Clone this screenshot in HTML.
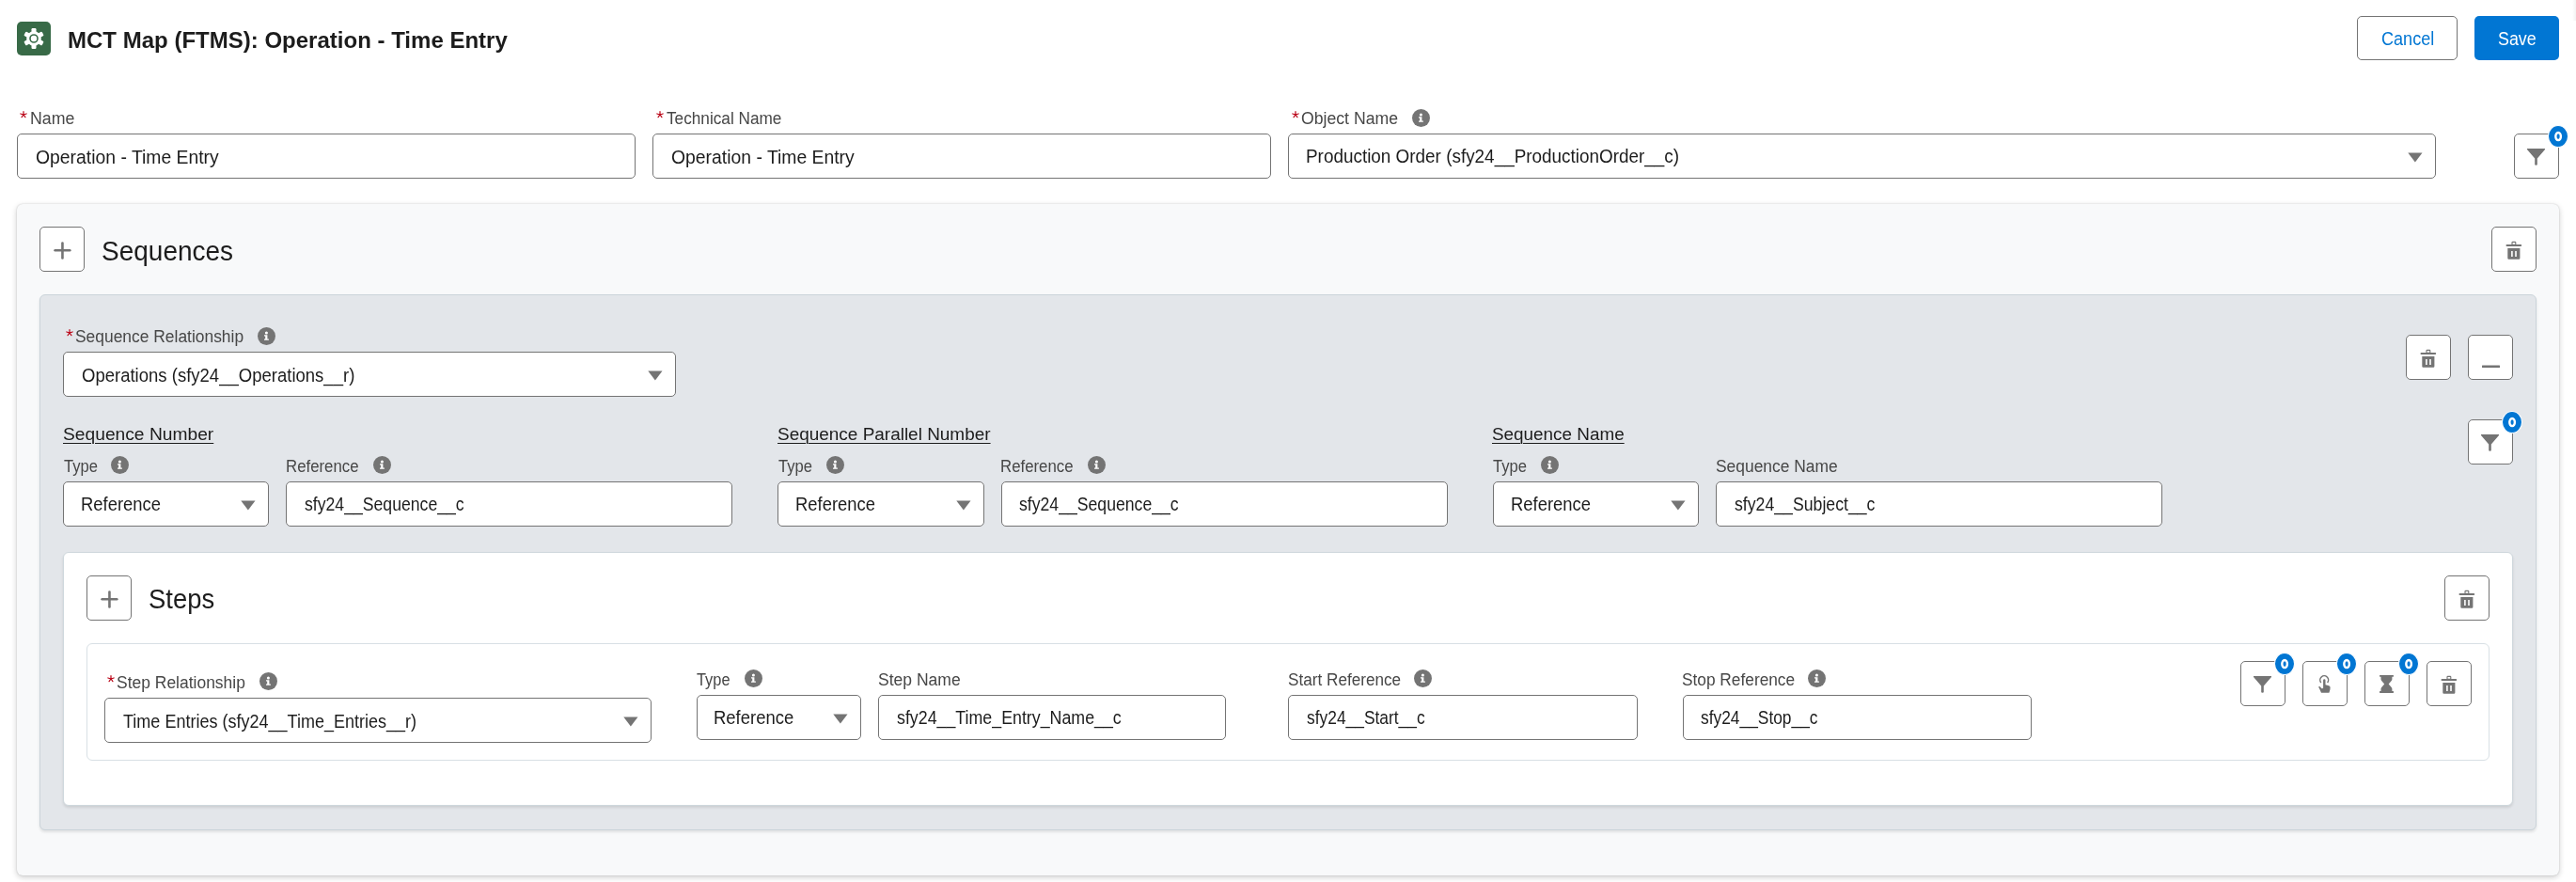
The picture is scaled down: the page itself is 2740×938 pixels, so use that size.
<!DOCTYPE html>
<html><head><meta charset='utf-8'><title>MCT Map</title>
<style>
html,body{margin:0;padding:0;background:#fff;width:2740px;height:938px;overflow:hidden;position:relative;font-family:"Liberation Sans", sans-serif;}
.abs,.t,.inp,.btn,.card,.gray,.white,.row,.badge,.info,.car{position:absolute;box-sizing:border-box;}
.t{white-space:pre;transform-origin:0 0;}
.inp{background:#fff;border:1px solid #747474;border-radius:5px;}
.btn{background:#fff;border:1px solid #747474;border-radius:5px;}
.btn svg{position:absolute;left:-1px;top:-1px;}
.card{background:#f8f9fa;border-radius:6px;box-shadow:0 0 1.5px rgba(0,0,0,0.2),0 2px 6px rgba(0,0,0,0.2);}
.gray{background:#e3e6ea;border:1px solid #cbd4da;border-radius:6px;box-shadow:0 2px 3px rgba(0,0,0,0.10);}
.white{background:#fff;border:1px solid #cfd8dd;border-radius:6px;box-shadow:0 2px 3px rgba(0,0,0,0.10);}
.row{background:#fff;border:1px solid #d8e0e5;border-radius:6px;}
.badge{width:22px;height:24px;border-radius:50%;background:#0176d3;border:1px solid #fff;color:#fff;font-weight:700;font-size:14px;line-height:22px;text-align:center;}
svg{display:block;}
</style></head><body>
<div class='abs' style='left:2736px;top:0;width:4px;height:22px;background:linear-gradient(to right,rgba(0,0,0,0),rgba(0,0,0,0.05))'></div><div class='abs' style='left:18px;top:23px;width:36px;height:36px;border-radius:5px;background:#386a47'>
<svg width='36' height='36' viewBox='0 0 36 36'><g fill='#fff' transform='translate(18 18)'>
<circle r='7.8'/>
<rect x='-2.5' y='-11' width='5' height='22' rx='1.2'/>
<rect x='-2.5' y='-11' width='5' height='22' rx='1.2' transform='rotate(60)'/>
<rect x='-2.5' y='-11' width='5' height='22' rx='1.2' transform='rotate(120)'/>
<circle r='4.0' fill='none' stroke='#386a47' stroke-width='1.6'/>
</g></svg></div><div class='btn' style='left:2507.00px;top:17.00px;width:107.00px;height:47.00px;'></div><div class='abs' style='left:2632.00px;top:17.00px;width:90.00px;height:47.00px;background:#0176d3;border-radius:5px;'></div><div class='inp' style='left:18.00px;top:142.00px;width:658.00px;height:48.00px;'></div><div class='inp' style='left:694.00px;top:142.00px;width:658.00px;height:48.00px;'></div><div class='inp' style='left:1370.00px;top:142.00px;width:1221.00px;height:48.00px;'></div><div class='car' style='left:2560.50px;top:162.00px'><svg width='16' height='11' viewBox='0 0 16 11'><path d='M0.3 0.6 H15.5 L7.9 10.4 Z' fill='#747474'/></svg></div><div class='btn' style='left:2674.00px;top:142.00px;width:48.00px;height:48.00px;background:#fff'><svg width='48' height='48' viewBox='0 0 48 48'><path fill='#747474' d='M14 15.9 H33 V17 L24.8 26.4 V33.0 Q24.8 33.8 23.5 33.8 Q22.2 33.8 22.2 33.0 V26.4 L14 17 Z'/></svg></div><div class='badge' style='left:2710.40px;top:132.70px'><svg width='20' height='22' viewBox='0 0 20 22'><ellipse cx='10.1' cy='11.1' rx='2.8' ry='4.05' fill='none' stroke='#fff' stroke-width='2.4'/></svg></div><div class='abs' style='left:19.90px;top:116.95px;width:10px;height:10px'><svg width='10' height='10' viewBox='0 0 10 10'><g stroke='#ba0517' stroke-width='1.2' stroke-linecap='round'><line x1='5' y1='5' x2='5.00' y2='1.70'/><line x1='5' y1='5' x2='8.14' y2='3.98'/><line x1='5' y1='5' x2='6.94' y2='7.67'/><line x1='5' y1='5' x2='3.06' y2='7.67'/><line x1='5' y1='5' x2='1.86' y2='3.98'/></g></svg></div><div class='abs' style='left:696.60px;top:116.95px;width:10px;height:10px'><svg width='10' height='10' viewBox='0 0 10 10'><g stroke='#ba0517' stroke-width='1.2' stroke-linecap='round'><line x1='5' y1='5' x2='5.00' y2='1.70'/><line x1='5' y1='5' x2='8.14' y2='3.98'/><line x1='5' y1='5' x2='6.94' y2='7.67'/><line x1='5' y1='5' x2='3.06' y2='7.67'/><line x1='5' y1='5' x2='1.86' y2='3.98'/></g></svg></div><div class='abs' style='left:1372.50px;top:116.95px;width:10px;height:10px'><svg width='10' height='10' viewBox='0 0 10 10'><g stroke='#ba0517' stroke-width='1.2' stroke-linecap='round'><line x1='5' y1='5' x2='5.00' y2='1.70'/><line x1='5' y1='5' x2='8.14' y2='3.98'/><line x1='5' y1='5' x2='6.94' y2='7.67'/><line x1='5' y1='5' x2='3.06' y2='7.67'/><line x1='5' y1='5' x2='1.86' y2='3.98'/></g></svg></div><div class='info' style='left:1502.00px;top:115.90px'><svg width='19' height='19' viewBox='0 0 19 19'><circle cx='9.5' cy='9.5' r='9.5' fill='#747474'/><circle cx='9.4' cy='5.95' r='1.55' fill='#fff'/><path d='M7.0 8.3 H10.4 V12.5 H11.9 V13.7 H7.0 V12.5 H8.2 V9.4 H7.0 Z' fill='#fff'/></svg></div><div class='card' style='left:18.00px;top:217.00px;width:2704.00px;height:714.00px;'></div><div class='btn' style='left:42.00px;top:241.00px;width:48.00px;height:48.00px;background:#fff'><svg width='48' height='48' viewBox='0 0 48 48'><g stroke='#747474' stroke-width='2.6' stroke-linecap='round'><line x1='16.6' y1='25.2' x2='32.3' y2='25.2'/><line x1='24.45' y1='17.5' x2='24.45' y2='33.4'/></g></svg></div><div class='btn' style='left:2650.00px;top:241.00px;width:48.00px;height:48.00px;background:#fff'><svg width='48' height='48' viewBox='0 0 48 48'><g fill='#747474' transform='translate(0.4,0)'>
<rect x='21.6' y='16.4' width='3.8' height='3.0' rx='0.7' fill='none' stroke='#747474' stroke-width='1.1'/>
<rect x='15.1' y='19.1' width='16.7' height='1.9' rx='0.9'/>
<path fill-rule='evenodd' d='M16.9 23.1 H30.0 V33.6 Q30.0 34.8 28.8 34.8 H18.1 Q16.9 34.8 16.9 33.6 Z M20.7 25.9 V32.0 H22.3 V25.9 Z M24.8 25.9 V32.0 H26.4 V25.9 Z'/>
</g></svg></div><div class='gray' style='left:42.00px;top:313.00px;width:2656.00px;height:570.00px;'></div><div class='inp' style='left:67.00px;top:374.00px;width:652.00px;height:48.00px;'></div><div class='car' style='left:688.50px;top:394.00px'><svg width='16' height='11' viewBox='0 0 16 11'><path d='M0.3 0.6 H15.5 L7.9 10.4 Z' fill='#747474'/></svg></div><div class='abs' style='left:69.30px;top:348.70px;width:10px;height:10px'><svg width='10' height='10' viewBox='0 0 10 10'><g stroke='#ba0517' stroke-width='1.2' stroke-linecap='round'><line x1='5' y1='5' x2='5.00' y2='1.70'/><line x1='5' y1='5' x2='8.14' y2='3.98'/><line x1='5' y1='5' x2='6.94' y2='7.67'/><line x1='5' y1='5' x2='3.06' y2='7.67'/><line x1='5' y1='5' x2='1.86' y2='3.98'/></g></svg></div><div class='info' style='left:273.80px;top:348.00px'><svg width='19' height='19' viewBox='0 0 19 19'><circle cx='9.5' cy='9.5' r='9.5' fill='#747474'/><circle cx='9.4' cy='5.95' r='1.55' fill='#fff'/><path d='M7.0 8.3 H10.4 V12.5 H11.9 V13.7 H7.0 V12.5 H8.2 V9.4 H7.0 Z' fill='#fff'/></svg></div><div class='btn' style='left:2559.00px;top:356.00px;width:48.00px;height:48.00px;background:#fff'><svg width='48' height='48' viewBox='0 0 48 48'><g fill='#747474' transform='translate(0.4,0)'>
<rect x='21.6' y='16.4' width='3.8' height='3.0' rx='0.7' fill='none' stroke='#747474' stroke-width='1.1'/>
<rect x='15.1' y='19.1' width='16.7' height='1.9' rx='0.9'/>
<path fill-rule='evenodd' d='M16.9 23.1 H30.0 V33.6 Q30.0 34.8 28.8 34.8 H18.1 Q16.9 34.8 16.9 33.6 Z M20.7 25.9 V32.0 H22.3 V25.9 Z M24.8 25.9 V32.0 H26.4 V25.9 Z'/>
</g></svg></div><div class='btn' style='left:2625.00px;top:356.00px;width:48.00px;height:48.00px;background:#fff'><svg width='48' height='48' viewBox='0 0 48 48'><rect x='15' y='32.5' width='19' height='2.6' rx='0.5' fill='#747474'/></svg></div><div class='btn' style='left:2625.00px;top:446.00px;width:48.00px;height:48.00px;background:#fff'><svg width='48' height='48' viewBox='0 0 48 48'><path fill='#747474' d='M14 15.9 H33 V17 L24.8 26.4 V33.0 Q24.8 33.8 23.5 33.8 Q22.2 33.8 22.2 33.0 V26.4 L14 17 Z'/></svg></div><div class='badge' style='left:2661.40px;top:436.70px'><svg width='20' height='22' viewBox='0 0 20 22'><ellipse cx='10.1' cy='11.1' rx='2.8' ry='4.05' fill='none' stroke='#fff' stroke-width='2.4'/></svg></div><div class='inp' style='left:67.00px;top:512.00px;width:219.00px;height:48.00px;'></div><div class='car' style='left:255.50px;top:532.00px'><svg width='16' height='11' viewBox='0 0 16 11'><path d='M0.3 0.6 H15.5 L7.9 10.4 Z' fill='#747474'/></svg></div><div class='inp' style='left:304.00px;top:512.00px;width:475.00px;height:48.00px;'></div><div class='info' style='left:118.00px;top:485.00px'><svg width='19' height='19' viewBox='0 0 19 19'><circle cx='9.5' cy='9.5' r='9.5' fill='#747474'/><circle cx='9.4' cy='5.95' r='1.55' fill='#fff'/><path d='M7.0 8.3 H10.4 V12.5 H11.9 V13.7 H7.0 V12.5 H8.2 V9.4 H7.0 Z' fill='#fff'/></svg></div><div class='inp' style='left:827.00px;top:512.00px;width:220.00px;height:48.00px;'></div><div class='car' style='left:1016.50px;top:532.00px'><svg width='16' height='11' viewBox='0 0 16 11'><path d='M0.3 0.6 H15.5 L7.9 10.4 Z' fill='#747474'/></svg></div><div class='inp' style='left:1065.00px;top:512.00px;width:475.00px;height:48.00px;'></div><div class='info' style='left:878.70px;top:485.00px'><svg width='19' height='19' viewBox='0 0 19 19'><circle cx='9.5' cy='9.5' r='9.5' fill='#747474'/><circle cx='9.4' cy='5.95' r='1.55' fill='#fff'/><path d='M7.0 8.3 H10.4 V12.5 H11.9 V13.7 H7.0 V12.5 H8.2 V9.4 H7.0 Z' fill='#fff'/></svg></div><div class='inp' style='left:1588.00px;top:512.00px;width:219.00px;height:48.00px;'></div><div class='car' style='left:1776.50px;top:532.00px'><svg width='16' height='11' viewBox='0 0 16 11'><path d='M0.3 0.6 H15.5 L7.9 10.4 Z' fill='#747474'/></svg></div><div class='inp' style='left:1825.00px;top:512.00px;width:475.00px;height:48.00px;'></div><div class='info' style='left:1639.00px;top:485.00px'><svg width='19' height='19' viewBox='0 0 19 19'><circle cx='9.5' cy='9.5' r='9.5' fill='#747474'/><circle cx='9.4' cy='5.95' r='1.55' fill='#fff'/><path d='M7.0 8.3 H10.4 V12.5 H11.9 V13.7 H7.0 V12.5 H8.2 V9.4 H7.0 Z' fill='#fff'/></svg></div><div class='info' style='left:396.75px;top:485.00px'><svg width='19' height='19' viewBox='0 0 19 19'><circle cx='9.5' cy='9.5' r='9.5' fill='#747474'/><circle cx='9.4' cy='5.95' r='1.55' fill='#fff'/><path d='M7.0 8.3 H10.4 V12.5 H11.9 V13.7 H7.0 V12.5 H8.2 V9.4 H7.0 Z' fill='#fff'/></svg></div><div class='info' style='left:1156.75px;top:485.00px'><svg width='19' height='19' viewBox='0 0 19 19'><circle cx='9.5' cy='9.5' r='9.5' fill='#747474'/><circle cx='9.4' cy='5.95' r='1.55' fill='#fff'/><path d='M7.0 8.3 H10.4 V12.5 H11.9 V13.7 H7.0 V12.5 H8.2 V9.4 H7.0 Z' fill='#fff'/></svg></div><div class='white' style='left:67.00px;top:587.00px;width:2606.00px;height:270.00px;'></div><div class='btn' style='left:92.00px;top:612.00px;width:48.00px;height:48.00px;background:#fff'><svg width='48' height='48' viewBox='0 0 48 48'><g stroke='#747474' stroke-width='2.6' stroke-linecap='round'><line x1='16.6' y1='25.2' x2='32.3' y2='25.2'/><line x1='24.45' y1='17.5' x2='24.45' y2='33.4'/></g></svg></div><div class='btn' style='left:2600.00px;top:612.00px;width:48.00px;height:48.00px;background:#fff'><svg width='48' height='48' viewBox='0 0 48 48'><g fill='#747474' transform='translate(0.4,0)'>
<rect x='21.6' y='16.4' width='3.8' height='3.0' rx='0.7' fill='none' stroke='#747474' stroke-width='1.1'/>
<rect x='15.1' y='19.1' width='16.7' height='1.9' rx='0.9'/>
<path fill-rule='evenodd' d='M16.9 23.1 H30.0 V33.6 Q30.0 34.8 28.8 34.8 H18.1 Q16.9 34.8 16.9 33.6 Z M20.7 25.9 V32.0 H22.3 V25.9 Z M24.8 25.9 V32.0 H26.4 V25.9 Z'/>
</g></svg></div><div class='row' style='left:92.00px;top:684.00px;width:2556.00px;height:125.00px;'></div><div class='inp' style='left:111.00px;top:742.00px;width:582.00px;height:48.00px;'></div><div class='car' style='left:662.50px;top:762.00px'><svg width='16' height='11' viewBox='0 0 16 11'><path d='M0.3 0.6 H15.5 L7.9 10.4 Z' fill='#747474'/></svg></div><div class='abs' style='left:113.40px;top:716.60px;width:10px;height:10px'><svg width='10' height='10' viewBox='0 0 10 10'><g stroke='#ba0517' stroke-width='1.2' stroke-linecap='round'><line x1='5' y1='5' x2='5.00' y2='1.70'/><line x1='5' y1='5' x2='8.14' y2='3.98'/><line x1='5' y1='5' x2='6.94' y2='7.67'/><line x1='5' y1='5' x2='3.06' y2='7.67'/><line x1='5' y1='5' x2='1.86' y2='3.98'/></g></svg></div><div class='info' style='left:275.50px;top:714.90px'><svg width='19' height='19' viewBox='0 0 19 19'><circle cx='9.5' cy='9.5' r='9.5' fill='#747474'/><circle cx='9.4' cy='5.95' r='1.55' fill='#fff'/><path d='M7.0 8.3 H10.4 V12.5 H11.9 V13.7 H7.0 V12.5 H8.2 V9.4 H7.0 Z' fill='#fff'/></svg></div><div class='inp' style='left:741.00px;top:739.00px;width:175.00px;height:48.00px;'></div><div class='car' style='left:885.50px;top:759.00px'><svg width='16' height='11' viewBox='0 0 16 11'><path d='M0.3 0.6 H15.5 L7.9 10.4 Z' fill='#747474'/></svg></div><div class='info' style='left:791.75px;top:711.75px'><svg width='19' height='19' viewBox='0 0 19 19'><circle cx='9.5' cy='9.5' r='9.5' fill='#747474'/><circle cx='9.4' cy='5.95' r='1.55' fill='#fff'/><path d='M7.0 8.3 H10.4 V12.5 H11.9 V13.7 H7.0 V12.5 H8.2 V9.4 H7.0 Z' fill='#fff'/></svg></div><div class='inp' style='left:934.00px;top:739.00px;width:370.00px;height:48.00px;'></div><div class='inp' style='left:1370.00px;top:739.00px;width:372.00px;height:48.00px;'></div><div class='info' style='left:1503.75px;top:711.75px'><svg width='19' height='19' viewBox='0 0 19 19'><circle cx='9.5' cy='9.5' r='9.5' fill='#747474'/><circle cx='9.4' cy='5.95' r='1.55' fill='#fff'/><path d='M7.0 8.3 H10.4 V12.5 H11.9 V13.7 H7.0 V12.5 H8.2 V9.4 H7.0 Z' fill='#fff'/></svg></div><div class='inp' style='left:1790.00px;top:739.00px;width:371.00px;height:48.00px;'></div><div class='info' style='left:1923.00px;top:711.75px'><svg width='19' height='19' viewBox='0 0 19 19'><circle cx='9.5' cy='9.5' r='9.5' fill='#747474'/><circle cx='9.4' cy='5.95' r='1.55' fill='#fff'/><path d='M7.0 8.3 H10.4 V12.5 H11.9 V13.7 H7.0 V12.5 H8.2 V9.4 H7.0 Z' fill='#fff'/></svg></div><div class='btn' style='left:2383.00px;top:703.00px;width:48.00px;height:48.00px;background:#fff'><svg width='48' height='48' viewBox='0 0 48 48'><path fill='#747474' d='M14 15.9 H33 V17 L24.8 26.4 V33.0 Q24.8 33.8 23.5 33.8 Q22.2 33.8 22.2 33.0 V26.4 L14 17 Z'/></svg></div><div class='badge' style='left:2419.40px;top:693.70px'><svg width='20' height='22' viewBox='0 0 20 22'><ellipse cx='10.1' cy='11.1' rx='2.8' ry='4.05' fill='none' stroke='#fff' stroke-width='2.4'/></svg></div><div class='btn' style='left:2449.00px;top:703.00px;width:48.00px;height:48.00px;background:#fff'><svg width='48' height='48' viewBox='0 0 48 48'><g transform='translate(9,9)'>
<path d='M10.8 14.0 A4.4 4.4 0 1 1 17.6 14.0' fill='none' stroke='#747474' stroke-width='1.5'/>
<path fill='#747474' d='M13.1 20 V11.4 Q13.1 10.2 14.3 10.2 Q15.5 10.2 15.5 11.4 V16.3 L19.2 17.2 Q20.6 17.6 20.6 19 L20.4 21.5 L19.4 24.8 H11 L9.6 21.5 L8.2 18.8 Q8.3 17.6 9.4 18 L11.5 20.2 Z'/>
</g></svg></div><div class='badge' style='left:2485.40px;top:693.70px'><svg width='20' height='22' viewBox='0 0 20 22'><ellipse cx='10.1' cy='11.1' rx='2.8' ry='4.05' fill='none' stroke='#fff' stroke-width='2.4'/></svg></div><div class='btn' style='left:2515.00px;top:703.00px;width:48.00px;height:48.00px;background:#fff'><svg width='48' height='48' viewBox='0 0 48 48'><g transform='translate(9,9)'>
<path fill='#747474' d='M7.1 6 H21.9 V7.8 H20.4 V10.2 Q20.4 11.3 19.5 12.2 L16.7 15.5 L19.5 18.8 Q20.4 19.7 20.4 20.8 V23.1 H21.9 V25 H7.1 V23.1 H8.5 V20.8 Q8.5 19.7 9.4 18.8 L12.2 15.5 L9.4 12.2 Q8.5 11.3 8.5 10.2 V7.8 H7.1 Z'/>
</g></svg></div><div class='badge' style='left:2551.40px;top:693.70px'><svg width='20' height='22' viewBox='0 0 20 22'><ellipse cx='10.1' cy='11.1' rx='2.8' ry='4.05' fill='none' stroke='#fff' stroke-width='2.4'/></svg></div><div class='btn' style='left:2581.00px;top:703.00px;width:48.00px;height:48.00px;background:#fff'><svg width='48' height='48' viewBox='0 0 48 48'><g fill='#747474' transform='translate(0.4,0)'>
<rect x='21.6' y='16.4' width='3.8' height='3.0' rx='0.7' fill='none' stroke='#747474' stroke-width='1.1'/>
<rect x='15.1' y='19.1' width='16.7' height='1.9' rx='0.9'/>
<path fill-rule='evenodd' d='M16.9 23.1 H30.0 V33.6 Q30.0 34.8 28.8 34.8 H18.1 Q16.9 34.8 16.9 33.6 Z M20.7 25.9 V32.0 H22.3 V25.9 Z M24.8 25.9 V32.0 H26.4 V25.9 Z'/>
</g></svg></div>
<div style='position:absolute;left:0;top:0;width:2740px;height:938px;will-change:transform'><div class='t' style='left:72.27px;top:31.00px;font-size:24.5px;line-height:24.5px;font-weight:700;color:#1c1c1c;transform:scaleX(0.9801);'>MCT Map (FTMS): Operation - Time Entry</div>
<div class='t' style='left:2532.75px;top:31.10px;font-size:20.5px;line-height:20.5px;font-weight:400;color:#0176d3;transform:scaleX(0.8810);'>Cancel</div>
<div class='t' style='left:2656.88px;top:31.10px;font-size:20.5px;line-height:20.5px;font-weight:400;color:#ffffff;transform:scaleX(0.8722);'>Save</div>
<div class='t' style='left:31.81px;top:117.25px;font-size:18.8px;line-height:18.8px;font-weight:400;color:#474747;transform:scaleX(0.9439);'>Name</div>
<div class='t' style='left:708.50px;top:117.25px;font-size:18.8px;line-height:18.8px;font-weight:400;color:#474747;transform:scaleX(0.9160);'>Technical Name</div>
<div class='t' style='left:1384.40px;top:117.25px;font-size:18.8px;line-height:18.8px;font-weight:400;color:#474747;transform:scaleX(0.9395);'>Object Name</div>
<div class='t' style='left:37.50px;top:157.40px;font-size:20.5px;line-height:20.5px;font-weight:400;color:#1c1c1c;transform:scaleX(0.9444);'>Operation - Time Entry</div>
<div class='t' style='left:713.75px;top:157.40px;font-size:20.5px;line-height:20.5px;font-weight:400;color:#1c1c1c;transform:scaleX(0.9444);'>Operation - Time Entry</div>
<div class='t' style='left:1389.08px;top:156.25px;font-size:20.5px;line-height:20.5px;font-weight:400;color:#1c1c1c;transform:scaleX(0.9219);'>Production Order (sfy24__ProductionOrder__c)</div>
<div class='t' style='left:108.13px;top:252.50px;font-size:29px;line-height:29px;font-weight:400;color:#1c1c1c;transform:scaleX(0.9653);'>Sequences</div>
<div class='t' style='left:79.82px;top:349.00px;font-size:18.8px;line-height:18.8px;font-weight:400;color:#474747;transform:scaleX(0.9271);'>Sequence Relationship</div>
<div class='t' style='left:86.75px;top:388.50px;font-size:20.5px;line-height:20.5px;font-weight:400;color:#1c1c1c;transform:scaleX(0.9034);'>Operations (sfy24__Operations__r)</div>
<div class='t' style='left:66.50px;top:451.75px;font-size:19.2px;line-height:19.2px;font-weight:400;color:#1c1c1c;transform:scaleX(1.0016);text-decoration:underline;text-underline-offset:3px;text-decoration-thickness:1.4px;'>Sequence Number</div>
<div class='t' style='left:67.50px;top:486.90px;font-size:18.8px;line-height:18.8px;font-weight:400;color:#474747;transform:scaleX(0.8841);'>Type</div>
<div class='t' style='left:304.10px;top:486.90px;font-size:18.8px;line-height:18.8px;font-weight:400;color:#474747;transform:scaleX(0.8953);'>Reference</div>
<div class='t' style='left:86.10px;top:526.00px;font-size:20.5px;line-height:20.5px;font-weight:400;color:#1c1c1c;transform:scaleX(0.8978);'>Reference</div>
<div class='t' style='left:323.75px;top:526.00px;font-size:20.5px;line-height:20.5px;font-weight:400;color:#1c1c1c;transform:scaleX(0.8604);'>sfy24__Sequence__c</div>
<div class='t' style='left:826.51px;top:451.75px;font-size:19.2px;line-height:19.2px;font-weight:400;color:#1c1c1c;transform:scaleX(0.9880);text-decoration:underline;text-underline-offset:3px;text-decoration-thickness:1.4px;'>Sequence Parallel Number</div>
<div class='t' style='left:827.50px;top:486.90px;font-size:18.8px;line-height:18.8px;font-weight:400;color:#474747;transform:scaleX(0.8841);'>Type</div>
<div class='t' style='left:1064.10px;top:486.90px;font-size:18.8px;line-height:18.8px;font-weight:400;color:#474747;transform:scaleX(0.8953);'>Reference</div>
<div class='t' style='left:846.10px;top:526.00px;font-size:20.5px;line-height:20.5px;font-weight:400;color:#1c1c1c;transform:scaleX(0.8978);'>Reference</div>
<div class='t' style='left:1083.75px;top:526.00px;font-size:20.5px;line-height:20.5px;font-weight:400;color:#1c1c1c;transform:scaleX(0.8604);'>sfy24__Sequence__c</div>
<div class='t' style='left:1587.27px;top:451.75px;font-size:19.2px;line-height:19.2px;font-weight:400;color:#1c1c1c;transform:scaleX(0.9842);text-decoration:underline;text-underline-offset:3px;text-decoration-thickness:1.4px;'>Sequence Name</div>
<div class='t' style='left:1588.25px;top:486.90px;font-size:18.8px;line-height:18.8px;font-weight:400;color:#474747;transform:scaleX(0.8841);'>Type</div>
<div class='t' style='left:1824.82px;top:486.90px;font-size:18.8px;line-height:18.8px;font-weight:400;color:#474747;transform:scaleX(0.9263);'>Sequence Name</div>
<div class='t' style='left:1606.85px;top:526.00px;font-size:20.5px;line-height:20.5px;font-weight:400;color:#1c1c1c;transform:scaleX(0.8978);'>Reference</div>
<div class='t' style='left:1844.50px;top:526.00px;font-size:20.5px;line-height:20.5px;font-weight:400;color:#1c1c1c;transform:scaleX(0.8627);'>sfy24__Subject__c</div>
<div class='t' style='left:158.45px;top:622.90px;font-size:29px;line-height:29px;font-weight:400;color:#1c1c1c;transform:scaleX(0.9452);'>Steps</div>
<div class='t' style='left:124.07px;top:716.90px;font-size:18.8px;line-height:18.8px;font-weight:400;color:#474747;transform:scaleX(0.9298);'>Step Relationship</div>
<div class='t' style='left:130.50px;top:756.50px;font-size:20.5px;line-height:20.5px;font-weight:400;color:#1c1c1c;transform:scaleX(0.8789);'>Time Entries (sfy24__Time_Entries__r)</div>
<div class='t' style='left:741.25px;top:714.00px;font-size:18.8px;line-height:18.8px;font-weight:400;color:#474747;transform:scaleX(0.8720);'>Type</div>
<div class='t' style='left:759.10px;top:752.60px;font-size:20.5px;line-height:20.5px;font-weight:400;color:#1c1c1c;transform:scaleX(0.9005);'>Reference</div>
<div class='t' style='left:933.57px;top:714.00px;font-size:18.8px;line-height:18.8px;font-weight:400;color:#474747;transform:scaleX(0.9328);'>Step Name</div>
<div class='t' style='left:953.75px;top:752.60px;font-size:20.5px;line-height:20.5px;font-weight:400;color:#1c1c1c;transform:scaleX(0.8682);'>sfy24__Time_Entry_Name__c</div>
<div class='t' style='left:1369.59px;top:714.00px;font-size:18.8px;line-height:18.8px;font-weight:400;color:#474747;transform:scaleX(0.9135);'>Start Reference</div>
<div class='t' style='left:1389.50px;top:752.60px;font-size:20.5px;line-height:20.5px;font-weight:400;color:#1c1c1c;transform:scaleX(0.8480);'>sfy24__Start__c</div>
<div class='t' style='left:1789.08px;top:714.00px;font-size:18.8px;line-height:18.8px;font-weight:400;color:#474747;transform:scaleX(0.9205);'>Stop Reference</div>
<div class='t' style='left:1809.25px;top:752.60px;font-size:20.5px;line-height:20.5px;font-weight:400;color:#1c1c1c;transform:scaleX(0.8469);'>sfy24__Stop__c</div></div>
</body></html>
